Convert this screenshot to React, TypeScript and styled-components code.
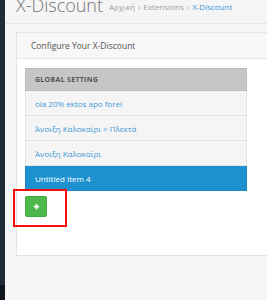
import React from 'react';
import styled, { createGlobalStyle } from 'styled-components';

const GlobalStyle = createGlobalStyle`
    html, body {
        margin: 0;
        padding: 0;
        background: #f5f5f5;
        font-family: 'Open Sans', 'DejaVu Sans', sans-serif;
    }
`;

const Page = styled.div`
    display: flex;
    height: 300px;
    overflow: hidden;
`;

const Sidebar = styled.div`
    width: 5px;
    flex-shrink: 0;
    display: flex;
    flex-direction: column;
    background: #1f2b38;
`;

const SidebarFoot = styled.div`
    margin-top: auto;
    height: 15px;
    background: #10161d;
`;

const Main = styled.div`
    flex: 1;
    overflow: hidden;
    background: #f5f5f5;
`;

const PageHeader = styled.div`
    display: flex;
    align-items: flex-end;
    gap: 6px;
    height: 23px;
    padding-left: 11px;
    border-bottom: 1px solid #e6e6e6;
`;

const Title = styled.h1`
    margin: 0 0 11px;
    font-size: 18px;
    font-weight: 300;
    line-height: 14px;
    color: #757575;
    white-space: nowrap;
`;

const Breadcrumb = styled.div`
    display: flex;
    align-self: flex-start;
    margin-top: 1px;
    gap: 3px;
    font-size: 8px;
    color: #a0a0a0;
    white-space: nowrap;
`;

const Crumb = styled.span<{ $active?: boolean }>`
    color: ${props => (props.$active ? '#3d9ad9' : '#a0a0a0')};
`;

const Panel = styled.div`
    margin: 8px -20px 0 11px;
    border: 1px solid #e4e4e4;
    background: #fff;
`;

const PanelHeading = styled.div`
    height: 25px;
    display: flex;
    align-items: center;
    padding-left: 14px;
    background: #f7f7f7;
    border-bottom: 1px solid #e6e6e6;
    font-size: 8.5px;
    color: #555;
`;

const PanelBody = styled.div`
    position: relative;
    height: 196px;
    box-sizing: border-box;
    padding: 9px 0 0 8px;
`;

const List = styled.div`
    width: 222px;
    display: flex;
    flex-direction: column;
`;

const ListHeader = styled.div`
    height: 23px;
    display: flex;
    align-items: center;
    padding-left: 9px;
    background: #c6c6c6;
    border: 1px solid #bcbcbc;
    box-sizing: border-box;
    font-size: 7px;
    font-weight: 700;
    letter-spacing: 0.3px;
    color: #555;
`;

const Item = styled.div<{ $active?: boolean }>`
    height: 25px;
    display: flex;
    align-items: center;
    padding-left: 9px;
    box-sizing: border-box;
    border: 1px solid ${props => (props.$active ? '#1b86c2' : '#e4e4e4')};
    border-top: none;
    background: ${props => (props.$active ? '#1e91cf' : '#f5f5f5')};
    color: ${props => (props.$active ? '#fff' : '#3f98d6')};
    font-size: 8px;
`;

const AddButton = styled.button`
    margin-top: 5px;
    width: 22px;
    height: 21px;
    padding: 0;
    border: 1px solid #43a843;
    border-radius: 2px;
    background: #4db74d;
    display: flex;
    align-items: center;
    justify-content: center;
`;

const Highlight = styled.div`
    position: absolute;
    left: -4px;
    top: 130px;
    width: 54px;
    height: 38px;
    border: 2px solid #f01010;
    box-sizing: border-box;
`;

const items = ['ola 20% ektos apo forel', 'Άνοιξη Καλοκαίρι > Πλεκτά', 'Άνοιξη Καλοκαίρι'];

export default function App() {
    return (
        <>
            <GlobalStyle />
            <Page>
                <Sidebar>
                    <SidebarFoot />
                </Sidebar>
                <Main>
                    <PageHeader>
                        <Title>X-Discount</Title>
                        <Breadcrumb>
                            <Crumb>Αρχική</Crumb>
                            <Crumb>›</Crumb>
                            <Crumb>Extensions</Crumb>
                            <Crumb>›</Crumb>
                            <Crumb $active>X-Discount</Crumb>
                        </Breadcrumb>
                    </PageHeader>
                    <Panel>
                        <PanelHeading>Configure Your X-Discount</PanelHeading>
                        <PanelBody>
                            <List>
                                <ListHeader>GLOBAL SETTING</ListHeader>
                                {items.map(text => (
                                    <Item key={text}>{text}</Item>
                                ))}
                                <Item $active>Untitled Item 4</Item>
                            </List>
                            <AddButton>
                                <svg width="7" height="7" viewBox="0 0 8 8">
                                    <path d="M4 1v6M1 4h6" stroke="#fff" strokeWidth="2" />
                                </svg>
                            </AddButton>
                            <Highlight />
                        </PanelBody>
                    </Panel>
                </Main>
            </Page>
        </>
    );
}
